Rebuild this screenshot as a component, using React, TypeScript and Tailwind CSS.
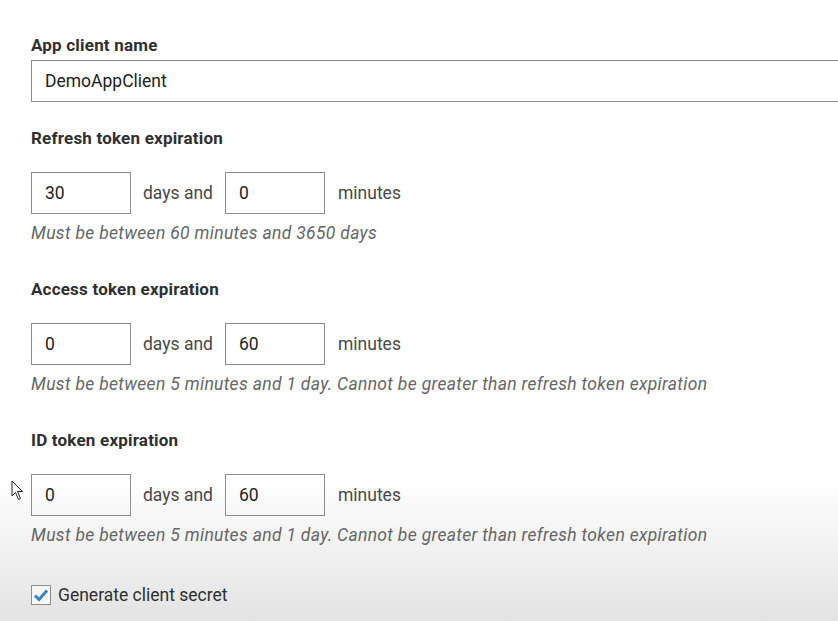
import React from "react";

const font = { fontFamily: "Roboto, 'Noto Sans', sans-serif" };

type Section = {
  label: string;
  days: string;
  minutes: string;
  help: string;
};

const sections: Section[] = [
  {
    label: "Refresh token expiration",
    days: "30",
    minutes: "0",
    help: "Must be between 60 minutes and 3650 days",
  },
  {
    label: "Access token expiration",
    days: "0",
    minutes: "60",
    help: "Must be between 5 minutes and 1 day. Cannot be greater than refresh token expiration",
  },
  {
    label: "ID token expiration",
    days: "0",
    minutes: "60",
    help: "Must be between 5 minutes and 1 day. Cannot be greater than refresh token expiration",
  },
];

const SmallBox: React.FC<{ value: string }> = ({ value }) => (
  <div className="w-[100px] h-[42px] border border-[#8d8d8d] flex items-center pl-[13px] pt-px text-[17.5px] text-[#1e1e1e]">
    {value}
  </div>
);

const ExpirationSection: React.FC<{ s: Section; first: boolean }> = ({ s, first }) => (
  <div className={first ? "mt-[26px]" : "mt-[35px]"}>
    <div className="text-[17px] leading-5 font-bold tracking-[0.2px] text-[#2f2f2f]">{s.label}</div>
    <div className="mt-[24px] flex items-center gap-3 text-[17.5px] text-[#484848]">
      <SmallBox value={s.days} />
      <span className="pt-px">days and</span>
      <SmallBox value={s.minutes} />
      <span className="ml-px pt-px">minutes</span>
    </div>
    <div className="mt-[8px] text-[17.5px] leading-[22px] italic tracking-[0.32px] text-[#666666] whitespace-nowrap">
      {s.help}
    </div>
  </div>
);

const App: React.FC = () => {
  return (
    <div
      style={font}
      className="relative w-[838px] h-[621px] overflow-hidden bg-linear-to-b from-white from-[77%] to-[#e3e3e3] pl-[31px] pt-[35px]"
    >
      <div className="text-[17px] leading-5 font-bold tracking-[0.2px] text-[#2f2f2f]">App client name</div>
      <div className="mt-[5px] w-[900px] h-[42px] border border-[#8d8d8d] flex items-center pl-[13px] pt-px text-[17.5px] text-[#1e1e1e]">
        DemoAppClient
      </div>

      {sections.map((s, i) => (
        <ExpirationSection key={s.label} s={s} first={i === 0} />
      ))}

      <div className="mt-[36px] flex items-center gap-[7px]">
        <div className="w-[20px] h-[20px] border border-[#8d8d8d] bg-[#f7f7f7] flex items-center justify-center">
          <svg width="16" height="14" viewBox="0 0 16 14">
            <path d="M2 7.5 L6 11.5 L14 2.5" fill="none" stroke="#3a84c6" strokeWidth="3" />
          </svg>
        </div>
        <span className="text-[17.5px] text-[#2f2f2f]">Generate client secret</span>
      </div>

      {/* mouse pointer */}
      <svg
        className="absolute left-[11px] top-[480px]"
        width="14"
        height="21"
        viewBox="0 0 14 21"
      >
        <path
          d="M1 1 L1 16 L4.5 12.5 L7.5 19.5 L9.5 18.5 L6.5 11.5 L11.5 11.5 Z"
          fill="#ffffff"
          stroke="#222222"
          strokeWidth="1"
          strokeLinejoin="round"
        />
      </svg>
    </div>
  );
};

export default App;
